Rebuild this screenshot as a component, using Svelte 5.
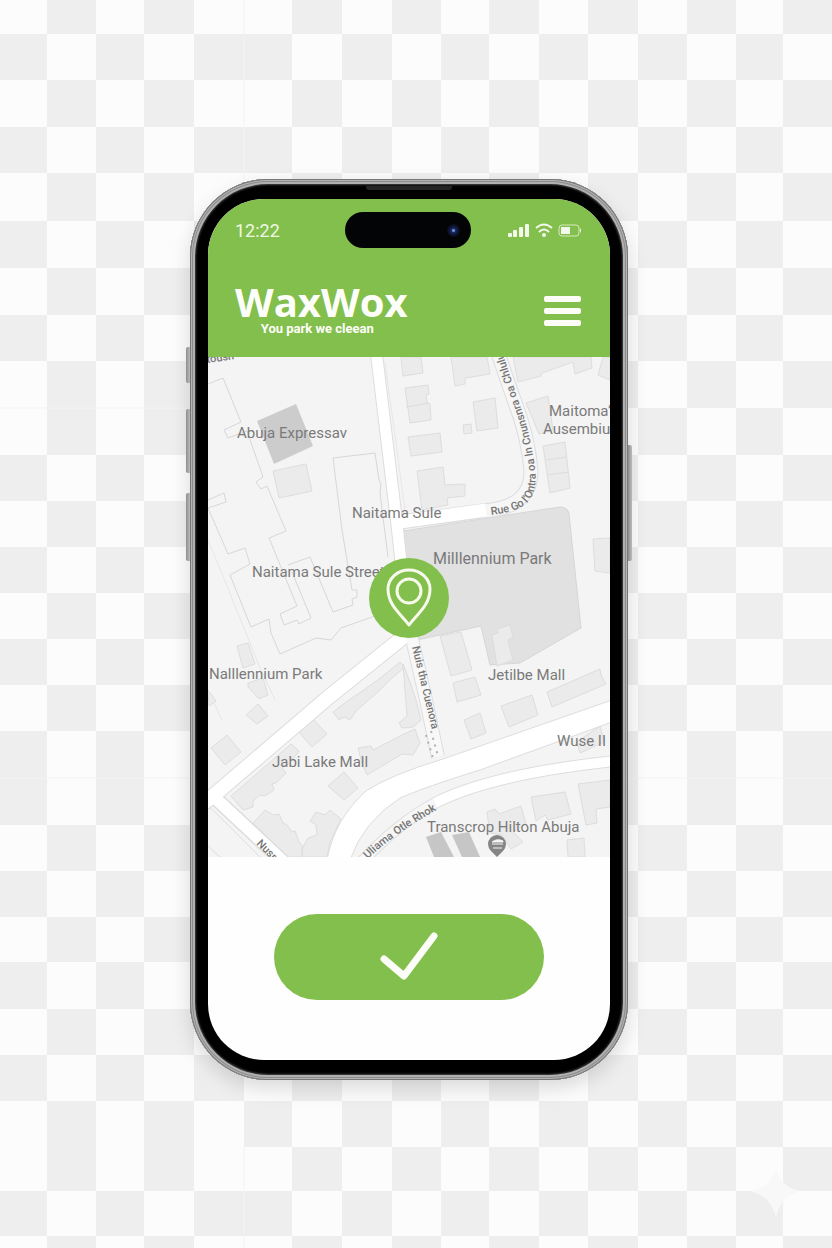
<script>
  const cols = [0, 47, 96, 144, 194, 244, 292, 342, 392, 441, 489, 539, 588, 638, 687, 736, 783, 832];
  const rows = [0, 34, 80, 127, 173, 221, 268, 315, 361, 408, 455, 501, 547, 593, 639, 685, 731, 778, 825, 871, 917, 962, 1009, 1055, 1101, 1147, 1191, 1236, 1248];

  function isDark(r, c) {
    const shift = c < 5 ? (r >= 9) + (r >= 17) + (r >= 25) : 1 + (r >= 17);
    return (r + c + shift) % 2 === 1;
  }

  const cells = [];
  for (let r = 0; r < rows.length - 1; r++) {
    for (let c = 0; c < cols.length - 1; c++) {
      if (isDark(r, c)) {
        cells.push({ x: cols[c], y: rows[r], w: cols[c + 1] - cols[c], h: rows[r + 1] - rows[r] });
      }
    }
  }

  const outlines = [
    'M208 384L223 378L241 422L224 430L228 438L247 431L263 477L256 482L261 489L267 486L286 531L269 538L297 606L280 614L284 625L297 620L299 624L311 618L292 572',
    'M208 500L224 493L226 502L208 508L228 554L245 548L250 564L230 575L251 627L269 619L271 633L280 654L316 638L331 640L341 628L375 616',
    'M342 530L333 458L375 453L379 480L381 484L380 493L388 557',
    'M342 530L352 590L357 590L357 597L352 599L353 605L333 612L310 557L288 565'
  ];

  const buildings = [
    '273,471 306,464 312,491 279,498',
    '237,646 248,643 255,664 243,668', '248,683 263,678 268,695 259,699 248,687',
    '246,715 258,704 268,716 257,724', '211,748 227,735 241,752 225,765', '208,690 216,701 209,706',
    '401,357 421,357 423,373 403,376',
    '405,388 428,385 429,394 426,395 427,403 430,404 431,420 410,423',
    '451,357 487,357 490,374 465,378 465,384 455,386',
    '513,357 573,357 591,357 592,368 575,374 573,362 542,373 541,376 518,382',
    '603,357 610,357 610,380 598,375',
    '473,402 495,398 498,428 477,431', '463,425 471,424 472,433 464,434',
    '408,437 440,433 442,452 411,456',
    '417,471 443,467 445,485 465,484 465,496 447,498 448,505 422,510',
    '526,403 548,396 553,430 539,434',
    '543,446 565,442 570,488 550,493',
    '593,539 610,538 610,573 595,571',
    '440,636 461,632 472,670 451,676', '453,683 475,677 481,695 457,702',
    '464,720 480,713 486,733 471,739',
    '501,706 532,695 538,715 509,727', '547,692 600,669 601,675 606,684 552,707',
    '577,742 600,726 604,742 580,753',
    '531,797 565,792 571,814 548,820 545,815 536,821',
    '578,784 610,780 610,807 596,809 597,823 586,825',
    '487,812 495,809 499,814 521,806 526,824 513,832 523,842 511,849 502,835 490,833',
    '567,840 584,838 585,857 568,857',
    '333,712 346,702 361,692 383,676 400,662 405,667 392,678 380,690 372,697 356,711 350,720 344,717 339,720',
    '403,664 410,682 416,700 421,720 413,727 402,728 399,723 407,716',
    '358,748 371,746 373,750 402,735 415,729 420,743 413,755 402,754 367,775 362,763',
    '298,731 313,719 327,734 312,747', '328,786 344,772 358,788 344,800',
    '231,796 291,744 299,751 290,763 282,768 286,773 276,783 272,784 274,790 265,796 260,795 253,801 253,807 243,810',
    '253,823 265,810 273,815 279,814 283,823 287,825 292,832 295,831 299,842 302,845 302,857 287,857',
    '303,847 308,838 317,835 316,825 310,821 316,812 325,815 330,810 341,819 330,842 327,857 302,857'
  ];

  const labels = [
    { t: 'Abuja Expressav', x: 237, y: 438 },
    { t: 'Naitama Sule', x: 352, y: 518 },
    { t: 'Naitama Sule Street', x: 252, y: 577 },
    { t: 'Nalllennium Park', x: 209, y: 679 },
    { t: 'Jabi Lake Mall', x: 272, y: 767 },
    { t: 'Jetilbe Mall', x: 488, y: 680 },
    { t: 'Maitoma’l', x: 549, y: 416 },
    { t: 'Ausembiu', x: 543, y: 434 },
    { t: 'Wuse II', x: 557, y: 746 },
    { t: 'Transcrop Hilton Abuja', x: 427, y: 832 }
  ];
</script>

<main>
  <svg class="board" viewBox="0 0 832 1248" preserveAspectRatio="xMidYMin slice" aria-hidden="true">
    <g shape-rendering="crispEdges">
      {#each cells as c}
        <rect x={c.x} y={c.y} width={c.w} height={c.h} fill="#eeeeee" />
      {/each}
    </g>
    <path d="M244 0V180M0 408H190M0 778H190M628 778H832M244 1147V1248" stroke="#f3f3f3" fill="none" />
    <path d="M776 1168Q781 1188 801 1191Q781 1196 776 1217Q771 1196 750 1191Q771 1188 776 1168Z" fill="#f8f8f8" />
  </svg>

  <div class="phone">
    <span class="key left k1"></span>
    <span class="key left k2"></span>
    <span class="key left k3"></span>
    <span class="key right k4"></span>
    <span class="speaker"></span>

    <div class="screen">
      <header>
        <div class="status">
          <span class="time">12:22</span>
          <span class="island"><span class="lens"></span></span>
          <svg class="signals" viewBox="0 0 74 16" role="img" aria-label="Signal, Wi-Fi and battery">
            <g fill="#f4f8ec">
              <rect x="1" y="11" width="4" height="4" rx="1" />
              <rect x="6" y="8" width="4" height="7" rx="1" />
              <rect x="12" y="5" width="4" height="10" rx="1" />
              <rect x="18" y="2" width="4" height="13" rx="1" />
              <circle cx="37" cy="13" r="2" />
              <rect x="54" y="5" width="9" height="7" />
              <path d="M73 6q2 2 0 5z" />
            </g>
            <g fill="none" stroke="#f4f8ec" stroke-width="2">
              <path d="M29 6Q37 -1 45 6" />
              <path d="M32 10Q37 5 42 10" />
            </g>
            <rect x="52" y="3" width="20" height="11" rx="3" fill="none" stroke="#d6eabd" />
          </svg>
        </div>
        <div class="bar">
          <div class="brand">
            <h1>WaxWox</h1>
            <p>You park we cleean</p>
          </div>
          <button class="menu" aria-label="Menu"><i></i><i></i><i></i></button>
        </div>
      </header>

      <svg class="map" viewBox="208 357 402 500" role="img" aria-label="Map">
        <defs>
          <path id="street-north" d="M491 515Q517 512 527 503Q538 492 535 468Q530 430 517 397L500 345" />
          <path id="street-south" d="M412 647L424 697L437 750" />
          <path id="street-west" d="M368 859Q393 834 442 807" />
          <path id="street-corner" d="M256 844L280 868" />
        </defs>
        <rect x="208" y="357" width="402" height="500" fill="#f4f4f4" />

        <path d="M403 531L560 507Q568 507 569 514L581 628L520 663L490 665L481 626L403 643Z" fill="#e1e1e1" stroke="#d6d6d6" />
        <path d="M492 635L498 633L497 629L510 625L513 637L508 640L513 660L497 666Z" fill="#ebebeb" stroke="#dcdcdc" />

        <g fill="none" stroke="#d7d7d7">
          {#each outlines as d}
            <path {d} />
          {/each}
          <path d="M208 540L231 596L260 668L275 700M208 690L222 720M385 362L405 510" stroke="#e6e6e6" />
        </g>
        <g fill="#ebebeb" stroke="#dddddd" stroke-linejoin="round">
          {#each buildings as points}
            <polygon {points} />
          {/each}
        </g>
        <path d="M406 407L429 403M546 460L567 457M547 475L569 472" stroke="#dddddd" />
        <polygon points="257,421 296,404 313,446 274,464" fill="#cccccc" />
        <polygon points="426,837 441,832 454,857 434,857" fill="#c6c6c6" />
        <polygon points="452,835 469,832 480,857 462,857" fill="#c6c6c6" />

        <g fill="none" stroke="#dddddd">
          <path d="M376 350L397 525L404 590" stroke-width="13" />
          <path d="M400 522L482 511Q532 508 531 470Q528 435 513 397L497 350" stroke-width="15" />
          <path d="M412 630L330 696L214 795L200 806" stroke-width="16" />
          <path d="M212 795L290 868" stroke-width="15" />
          <path d="M410 630L426 700L438 757" stroke-width="14" />
          <path d="M357 867Q395 825 435 803Q492 774 615 761" stroke-width="12" />
          <path d="M208 806L216 813L260 857M208 846L220 857" />
        </g>
        <path d="M327 860Q334 820 366 791Q390 775 443 759L612 700V722L480 770Q425 787 400 798Q363 822 350 860Z" fill="#ffffff" stroke="#dddddd" />
        <g fill="none" stroke="#ffffff">
          <path d="M376 350L397 525L404 590" stroke-width="11" />
          <path d="M482 511Q532 508 531 470Q528 435 513 397L497 350" stroke="#f6f6f6" stroke-width="13" />
          <path d="M400 522L486 510" stroke-width="13" />
          <path d="M412 630L330 696L214 795L200 806" stroke-width="14" />
          <path d="M212 795L290 868" stroke-width="12" />
          <path d="M410 630L426 700L438 757" stroke="#f8f8f8" stroke-width="12" />
          <path d="M357 867Q395 825 435 803" stroke="#f6f6f6" stroke-width="10" />
          <path d="M435 803Q492 774 615 761" stroke-width="10" />
        </g>
        <path d="M426 735L433 758M431 731L438 756" stroke="#b0b0b0" stroke-width="2" stroke-dasharray="2 5" />

        <g class="place">
          {#each labels as l}
            <text x={l.x} y={l.y}>{l.t}</text>
          {/each}
          <text class="large" x="433" y="564">Milllennium Park</text>
        </g>
        <g class="street">
          <text><textPath href="#street-north">Rue Go l’Ontra oa ln Cnunsnra oa Chlulu</textPath></text>
          <text><textPath href="#street-south">Nuis tha Cuenora</textPath></text>
          <text><textPath href="#street-west">Uliama Otle Rhok</textPath></text>
          <text><textPath href="#street-corner">Nusr</textPath></text>
          <text x="207" y="363" transform="rotate(-8 207 363)">tousn</text>
        </g>

        <path d="M497 857L491 851Q488 848 488 844A9 9 0 0 1 506 844Q506 848 503 851Z" fill="#858585" />
        <path d="M492 842Q497 838 503 841V842ZM492 844H503M493 848H502" fill="#f4f4f4" stroke="#f4f4f4" />

        <circle cx="409" cy="598" r="40" fill="#83bf4c" />
        <g fill="none" stroke="#f7faec" stroke-width="3">
          <path d="M409 625C402 615 388 606 388 589A21 19 0 0 1 430 589C430 606 416 615 409 625Z" stroke-linejoin="round" />
          <circle cx="409" cy="591" r="12" />
        </g>
      </svg>

      <footer>
        <button class="confirm" aria-label="Confirm location">
          <svg viewBox="0 0 60 50" aria-hidden="true">
            <path d="M5 27L25 44L55 4" fill="none" stroke="#fcfdf8" stroke-width="7" stroke-linecap="round" stroke-linejoin="round" />
          </svg>
        </button>
      </footer>
    </div>
  </div>
</main>

<style>
  :global(body) {
    margin: 0;
    background: #fbfcfb;
  }

  main {
    position: relative;
    box-sizing: border-box;
    min-height: 100vh;
    padding: 179px 14px 168px 0;
    display: flex;
    justify-content: center;
    align-items: flex-start;
    overflow: hidden;
    font-family: Roboto, "Liberation Sans", sans-serif;
  }

  .board {
    position: absolute;
    inset: 0;
    width: 100%;
    height: 100%;
  }

  .phone {
    position: relative;
    box-sizing: border-box;
    width: 100%;
    max-width: 438px;
    padding: 20px 18px;
    border-radius: 78px;
    background: #000000;
    box-shadow:
      inset 0 0 0 1px #777777,
      inset 0 0 0 2px #b4b4b4,
      inset 0 0 0 3px #8c8c8c,
      inset 0 0 0 5px #b0b0b0,
      inset 0 0 2px 6px #444444,
      0 8px 20px rgba(0, 0, 0, 0.14);
  }

  .key {
    position: absolute;
    width: 4px;
    background: linear-gradient(90deg, #8d8d8d, #bcbcbc);
  }

  .left {
    right: 100%;
    border-radius: 2px 0 0 2px;
  }

  .right {
    left: 100%;
    border-radius: 0 2px 2px 0;
  }

  .k1 { top: 168px; height: 36px; }
  .k2 { top: 230px; height: 64px; }
  .k3 { top: 314px; height: 68px; }
  .k4 { top: 266px; height: 116px; }

  .speaker {
    position: absolute;
    top: 7px;
    left: 50%;
    width: 86px;
    height: 4px;
    margin-left: -43px;
    border-radius: 0 0 3px 3px;
    background: #252525;
  }

  .screen {
    overflow: hidden;
    border-radius: 56px;
    background: #fefefe;
  }

  header {
    padding: 13px 29px 21px 27px;
    background: #83bf4c;
    color: #fdfef9;
  }

  .status {
    display: grid;
    grid-template-columns: 1fr auto 1fr;
    align-items: center;
  }

  .time {
    padding-top: 2px;
    font-size: 18px;
    line-height: 24px;
    color: #eff7e4;
  }

  .island {
    display: flex;
    justify-content: flex-end;
    align-items: center;
    box-sizing: border-box;
    width: 126px;
    height: 36px;
    padding-right: 11px;
    border-radius: 18px;
    background: #030405;
  }

  .lens {
    width: 13px;
    height: 13px;
    border-radius: 50%;
    background: radial-gradient(circle, #6b8ed0 0 1px, #1b2a66 2px, #10183c 4px, #0a0d1c 6px);
  }

  .signals {
    justify-self: end;
    width: 74px;
    height: 16px;
  }

  .bar {
    display: flex;
    justify-content: space-between;
    align-items: center;
    padding-top: 35px;
  }

  .brand {
    display: flex;
    flex-direction: column;
    align-items: center;
  }

  h1 {
    margin: 0;
    font: 700 40px/38px "Open Sans", sans-serif;
  }

  p {
    margin: 0;
    padding-right: 8px;
    font: 700 13px/15px Roboto, sans-serif;
  }

  .menu {
    display: flex;
    flex-direction: column;
    gap: 6px;
    padding: 2px 0 0;
    border: 0;
    background: none;
    cursor: pointer;
  }

  .menu i {
    width: 37px;
    height: 6px;
    border-radius: 2px;
    background: #fdfdf8;
  }

  .map {
    display: block;
    width: 100%;
    height: auto;
  }

  .place {
    font-size: 15px;
    fill: #7a7a7a;
  }

  .large {
    font-size: 16px;
  }

  .street {
    font-size: 11px;
    font-weight: 500;
    fill: #757575;
  }

  footer {
    display: flex;
    justify-content: center;
    padding: 57px 66px 60px;
  }

  .confirm {
    display: flex;
    justify-content: center;
    align-items: center;
    width: 100%;
    height: 86px;
    padding: 0;
    border: 0;
    border-radius: 43px;
    background: #83bf4c;
    cursor: pointer;
  }

  .confirm svg {
    width: 60px;
    height: 50px;
  }
</style>
